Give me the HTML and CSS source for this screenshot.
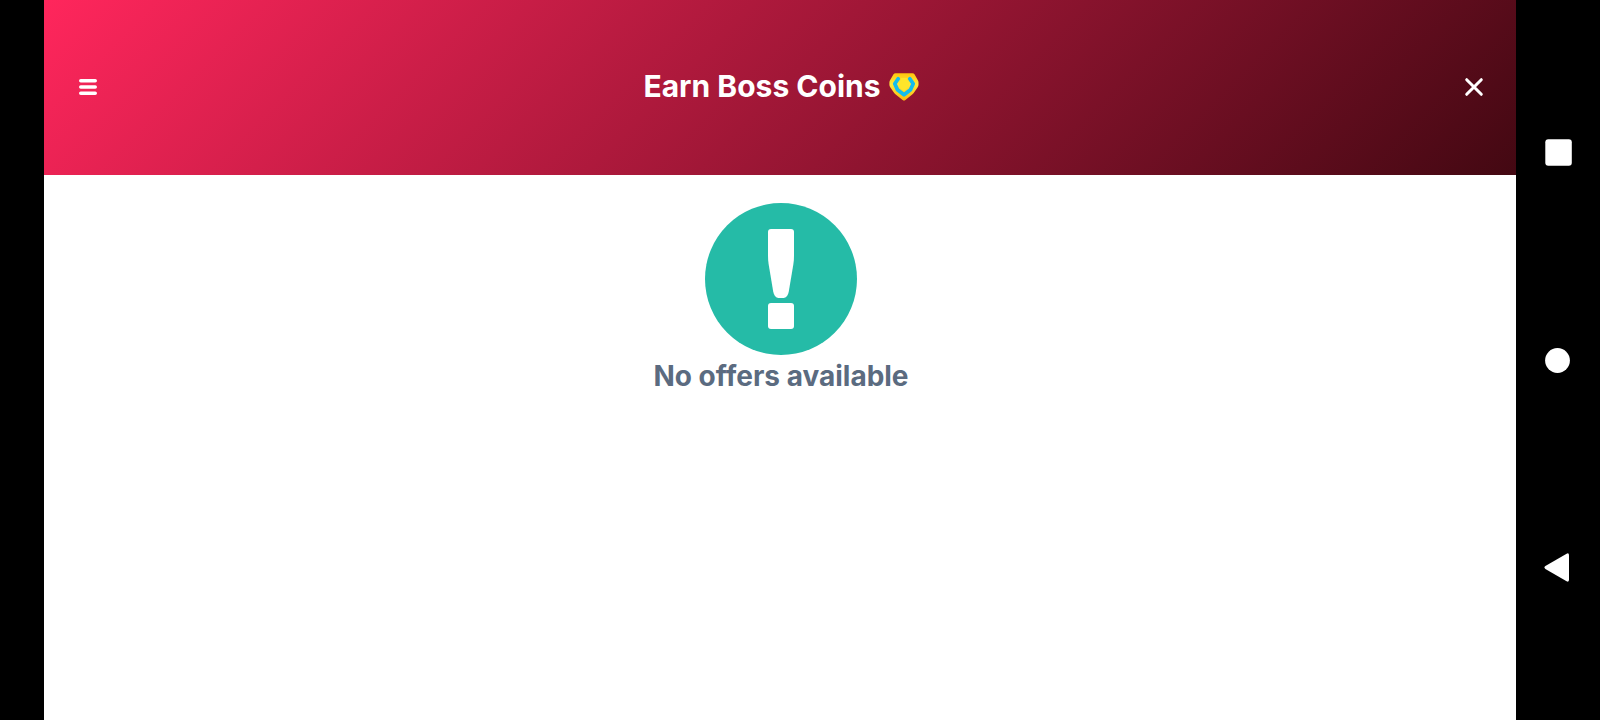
FILE: index.html
```
<!DOCTYPE html>
<html lang="en">
<head>
  <meta charset="UTF-8">
  <meta name="viewport" content="width=device-width, initial-scale=1">
  <title>Earn Boss Coins</title>
  <link rel="stylesheet" href="styles.css">
</head>
<body>
  <div class="app">
    <header class="header">
      <button class="icon-button" type="button" aria-label="Menu">
        <svg width="20" height="20" viewBox="0 0 20 20" fill="none" stroke="#fff" stroke-width="3.6" stroke-linecap="round">
          <path d="M2.8 3.7h14.4M2.8 10h14.4M2.8 16.300h14.4"/>
        </svg>
      </button>
      <h1 class="title">
        Earn Boss Coins
        <svg class="coin" width="30" height="30" viewBox="0 -2 30 30" aria-hidden="true">
          <defs>
            <linearGradient id="gold" x1="0" y1="0" x2="0" y2="1">
              <stop offset="0" stop-color="#ffc40c"/>
              <stop offset=".4" stop-color="#ffe93c"/>
              <stop offset="1" stop-color="#fdb90b"/>
            </linearGradient>
          </defs>
          <path d="M6.500.3h17q1.300 0 2 1l3.500 6.200q.5.9.5 2v2.300q0 1.300-.8 2.400l-4 5.800q-.6.800-1.500 1.400l-6.800 5.500q-1.400 1.100-2.800 0L6.700 21.400q-.9-.6-1.500-1.400L1.200 14.200Q.4 13.100.4 11.800V9.500q0-1.100.5-2l3.600-6.200q.7-1 2-1z" fill="url(#gold)"/>
          <path d="M9.200 5.800L5.800 10.800l2.700 6L15 21.800l6.500-5 2.700-6-3.400-5" fill="none" stroke="#14bdec" stroke-width="3.800" stroke-linejoin="round" stroke-linecap="round"/>
          <path d="M11.500 5h7l-.5 1.500 2.500 4-1.500 4-4 4-4-4-1.500-4 2.500-4z" fill="#ffe52a"/>
        </svg>
      </h1>
      <button class="icon-button" type="button" aria-label="Close">
        <svg width="20" height="20" viewBox="0 0 20 20" fill="none" stroke="#fff" stroke-width="3" stroke-linecap="round">
          <path d="M2.700 2.700l14.600 14.600M17.300 2.700L2.700 17.300"/>
        </svg>
      </button>
    </header>
    <main class="content">
      <svg class="notice-icon" width="152" height="152" viewBox="0 0 152 152" aria-hidden="true">
        <circle cx="76" cy="76" r="76" fill="#25bba7"/>
        <path d="M66 26h20q3 0 3 3v24q0 4-.6 8l-4.600 27.500q-1.200 6.500-5.300 6.500h-5q-4.100 0-5.300-6.500L63.600 61q-.6-4-.6-8V29q0-3 3-3z" fill="#fff"/>
        <rect x="63" y="100" width="26" height="26" rx="3" fill="#fff"/>
      </svg>
      <p class="notice-text">No offers available</p>
    </main>
  </div>
  <nav class="system-bar" aria-label="System">
    <button class="system-button" type="button" aria-label="Recent apps">
      <svg width="32" height="32" viewBox="0 0 32 32" fill="#fff"><rect x="3.300" y="2.300" width="26.500" height="26.500" rx="3"/></svg>
    </button>
    <button class="system-button" type="button" aria-label="Home">
      <svg width="32" height="32" viewBox="0 0 32 32" fill="#fff"><circle cx="15.500" cy="16.500" r="12.400"/></svg>
    </button>
    <button class="system-button" type="button" aria-label="Back">
      <svg width="32" height="32" viewBox="0 0 32 32" fill="#fff"><path d="M24.600 2.700q2.400-1.100 2.400 1.500v24.600q0 2.600-2.400 1.500L3.400 17.900q-2-1.400 0-2.800z"/></svg>
    </button>
  </nav>
</body>
</html>
```
FILE: styles.css
```
* {
  box-sizing: border-box;
}
body {
  display: flex;
  min-height: 100vh;
  margin: 0;
  padding-left: 44px;
  background-color: #000;
  font-family: Inter, "Liberation Sans", sans-serif;
  font-feature-settings: "calt" 0;
  font-variant-ligatures: none;
}
button {
  display: flex;
  align-items: center;
  justify-content: center;
  padding: 0;
  border: none;
  background: none;
  cursor: pointer;
}
.app {
  flex: 1;
  background-color: #fff;
}
/* Header */
.header {
  display: flex;
  align-items: center;
  justify-content: space-between;
  height: 175px;
  padding: 0 22px 2px 24px;
  background: linear-gradient(135deg, #ff265c, #a11737, #430812);
}
.icon-button {
  width: 40px;
  height: 40px;
}
.title {
  display: flex;
  align-items: center;
  gap: 8px;
  margin: 0;
  padding-bottom: 2px;
  color: #fff;
  font-size: 30px;
  font-weight: 700;
  line-height: 40px;
}
/* Empty state */
.content {
  display: flex;
  flex-direction: column;
  align-items: center;
  padding: 28px 0 0 2px;
}
.notice-text {
  margin: 4px 0 0;
  color: #5b6b80;
  font-size: 28px;
  font-weight: 700;
  line-height: 34px;
}
/* Android navigation buttons */
.system-bar {
  display: flex;
  flex-direction: column;
  align-items: center;
  justify-content: center;
  gap: 175px;
  width: 84px;
}
.system-button {
  width: 32px;
  height: 32px;
}
```
